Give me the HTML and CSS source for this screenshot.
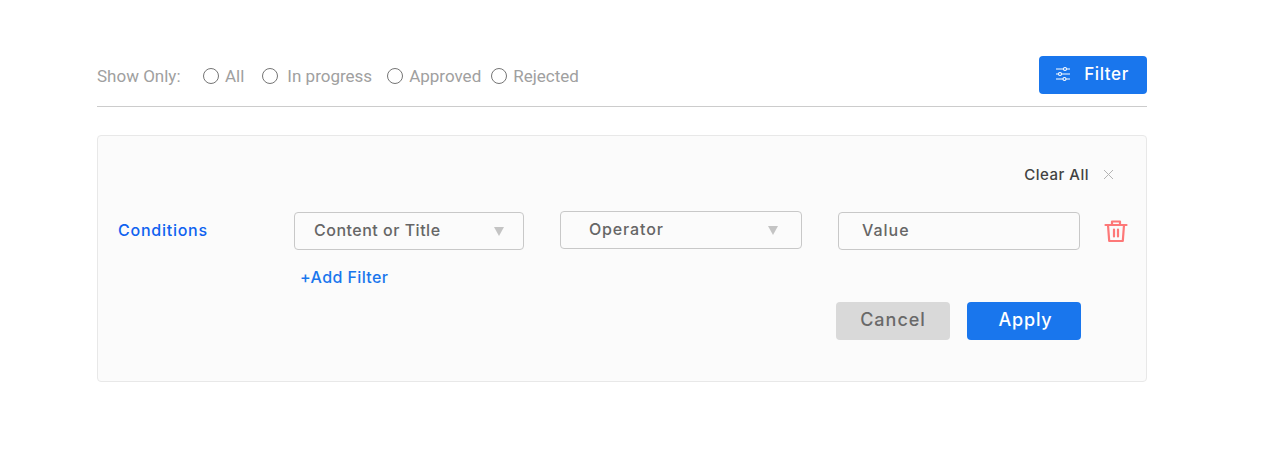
FILE: index.html
```html
<!DOCTYPE html>
<html lang="en">
<head>
<meta charset="utf-8">
<title>Filter</title>
<link rel="stylesheet" href="styles.css">
</head>
<body>
<main class="page">
  <header class="toolbar">
    <div class="options">
      <span class="show-label">Show Only:</span>
      <label class="radio r-all"><span class="circle"></span>All</label>
      <label class="radio r-prog"><span class="circle"></span>In progress</label>
      <label class="radio r-appr"><span class="circle"></span>Approved</label>
      <label class="radio"><span class="circle"></span>Rejected</label>
    </div>
    <button class="filter-btn">
      <svg class="filter-icon" width="16" height="16" viewBox="0 0 16 16" fill="none" stroke="#fff" stroke-width="1.1">
        <path d="M1 3h7.500M11.500 3H15M1 8h2.500M6.500 8H15M1 13h7M11 13h4"/>
        <circle cx="10" cy="3" r="1.500"/><circle cx="5" cy="8" r="1.500"/><circle cx="9.500" cy="13" r="1.500"/>
      </svg>
      <span>Filter</span>
    </button>
  </header>
  <section class="card">
    <div class="clear-row">
      <span class="clear-text">Clear All</span>
      <svg class="clear-x" width="11" height="11" viewBox="0 0 11 11" fill="none" stroke="#b4b4b4" stroke-width="1"><path d="M1 1l9 9M10 1l-9 9"/></svg>
    </div>
    <div class="cond-row">
      <span class="cond-label">Conditions</span>
      <div class="field f-content"><span>Content or Title</span><i class="caret"></i></div>
      <div class="field f-operator"><span>Operator</span><i class="caret"></i></div>
      <div class="field f-value"><span>Value</span></div>
      <svg class="trash" width="24" height="24" viewBox="0 0 24 24" fill="none" stroke="#fd7878" stroke-width="2.200" stroke-linejoin="round" stroke-linecap="round">
        <path d="M1.500 6h21M8 6V2.500h8V6M4 6l1.200 16h13.600L20 6M10 10.500v7M14 10.500v7"/>
      </svg>
    </div>
    <a class="add-filter">+Add Filter</a>
    <div class="actions">
      <button class="btn btn-cancel">Cancel</button>
      <button class="btn btn-apply">Apply</button>
    </div>
  </section>
</main>
</body>
</html>
```
FILE: styles.css
```css
* { box-sizing: border-box; }
html, body { margin: 0; background: #fff; }
body { font-family: "Inter", "Liberation Sans", sans-serif; }
.page { width: 1050px; margin-left: 97px; padding-top: 56px; }
.toolbar {
  display: flex; align-items: flex-start; justify-content: space-between; height: 51px;
  border-bottom: 1px solid #cccccc; color: #a0a0a0;
  font-family: "Roboto", sans-serif; font-size: 17px;
}
.options { display: flex; align-items: center; height: 38px; margin-top: 1px; }
.show-label { width: 106px; }
.radio { display: flex; align-items: center; gap: 6px; margin-right: 10px; }
.r-all { margin-right: 18px; }
.r-prog { margin-right: 15px; gap: 9px; }
.circle { width: 16px; height: 16px; border: 1px solid #757575; border-radius: 50%; }
.filter-btn {
  width: 108px; height: 38px; border: 0; border-radius: 4px;
  background: #1976ed; color: #fff; display: flex; align-items: center; justify-content: center; gap: 13px;
  font-family: "Inter", sans-serif; font-size: 17px; font-weight: 450; letter-spacing: .6px; padding: 0 2px 2px 0;
}
.card {
  margin-top: 28px; height: 247px; background: #fbfbfb; border: 1px solid #e8e8e8; border-radius: 4px;
  padding: 0 19px 0 20px; display: flex; flex-direction: column;
}
.clear-row { display: flex; justify-content: flex-end; align-items: center; gap: 14px; margin-top: 28px; height: 20px; padding-right: 13px; }
.clear-text { font-size: 15px; font-weight: 450; color: #424242; letter-spacing: .5px; }
.cond-row { display: flex; align-items: flex-start; margin-top: 28px; height: 38px; }
.cond-label { flex: none; width: 176px; line-height: 36px; font-size: 16px; font-weight: 450; color: #0f62f0; letter-spacing: .75px; }
.field {
  flex: none; height: 38px; border: 1px solid #c8c8c8; border-radius: 4px; display: flex; align-items: center; justify-content: space-between;
  font-size: 16px; font-weight: 450; color: #666; letter-spacing: .5px; padding-bottom: 2px;
}
.f-content { width: 230px; padding-left: 19px; padding-right: 19px; }
.f-operator { width: 242px; margin: -1px 36px 0; padding-left: 28px; padding-right: 23px; letter-spacing: .85px; }
.f-value { width: 242px; padding-left: 23px; padding-right: 24px; letter-spacing: 1px; }
.caret { width: 0; height: 0; margin-top: 2px; border: 5.500px solid transparent; border-top: 9px solid #c4c4c4; border-bottom: 0; }
.trash { flex: none; margin: 7px 0 0 24px; }
.add-filter { margin: 18px 0 0 182px; font-size: 16px; font-weight: 450; color: #1976ed; letter-spacing: .4px; line-height: 18px; }
.actions { display: flex; gap: 17px; margin: 16px 0 0 718px; }
.btn { width: 114px; height: 38px; border: 0; border-radius: 4px; font-family: inherit; font-size: 18px; font-weight: 450; padding: 0 0 3px; }
.btn-cancel { background: #d9d9d9; color: #696969; letter-spacing: 1px; }
.btn-apply { background: #1976ed; color: #fff; letter-spacing: .8px; padding-left: 3px; }
```
